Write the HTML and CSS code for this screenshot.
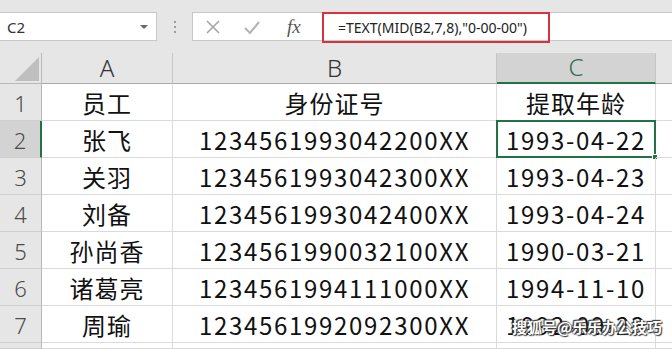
FILE: index.html
```html
<!DOCTYPE html>
<html lang="zh-CN">
<head>
  <meta charset="UTF-8" />
  <title>提取年龄</title>
  <link rel="stylesheet" href="styles.css">
</head>
<body>
  <!-- Formula bar -->
  <div class="formula-bar">
    <div class="name-box">
      <span class="name-text">C2</span>
      <span class="name-arrow"></span>
    </div>
    <div class="grip">
      <span></span><span></span><span></span>
    </div>
    <div class="fx-buttons">
      <svg class="fx-icon" width="16" height="16" viewBox="0 0 16 16">
        <path d="M2 2 L14 14 M14 2 L2 14" stroke="#a6a6a6" stroke-width="1.6" fill="none" />
      </svg>
      <svg class="fx-icon" width="18" height="16" viewBox="0 0 18 16">
        <path d="M2 9 L7 14 L16 3" stroke="#b3b3b3" stroke-width="2" fill="none" />
      </svg>
      <span class="fx-label">fx</span>
    </div>
    <div class="formula-input">
      <span class="formula-mark">=TEXT(MID(B2,7,8),"0-00-00")</span>
    </div>
  </div>

  <!-- Sheet grid -->
  <div class="sheet">
    <div class="corner"><span class="corner-tri"></span></div>
    <div class="col-head">A</div>
    <div class="col-head">B</div>
    <div class="col-head active">C</div>
    <div class="col-head last"></div>

    <div class="row-head">1</div>
    <div class="cell cjk">员工</div>
    <div class="cell cjk">身份证号</div>
    <div class="cell cjk">提取年龄</div>
    <div class="cell last"></div>

    <div class="row-head active">2</div>
    <div class="cell cjk">张飞</div>
    <div class="cell num">1234561993042200XX</div>
    <div class="cell num selected">1993-04-22<span class="fill-handle"></span></div>
    <div class="cell last"></div>

    <div class="row-head">3</div>
    <div class="cell cjk">关羽</div>
    <div class="cell num">1234561993042300XX</div>
    <div class="cell num">1993-04-23</div>
    <div class="cell last"></div>

    <div class="row-head">4</div>
    <div class="cell cjk">刘备</div>
    <div class="cell num">1234561993042400XX</div>
    <div class="cell num">1993-04-24</div>
    <div class="cell last"></div>

    <div class="row-head">5</div>
    <div class="cell cjk">孙尚香</div>
    <div class="cell num">1234561990032100XX</div>
    <div class="cell num">1990-03-21</div>
    <div class="cell last"></div>

    <div class="row-head">6</div>
    <div class="cell cjk">诸葛亮</div>
    <div class="cell num">1234561994111000XX</div>
    <div class="cell num">1994-11-10</div>
    <div class="cell last"></div>

    <div class="row-head">7</div>
    <div class="cell cjk">周瑜</div>
    <div class="cell num">1234561992092300XX</div>
    <div class="cell num">1992-09-23</div>
    <div class="cell last"></div>

    <div class="row-head"></div>
    <div class="cell"></div>
    <div class="cell"></div>
    <div class="cell"></div>
    <div class="cell last"></div>
  </div>

  <!-- Watermark -->
  <div class="watermark">搜狐号@乐乐办公技巧</div>
</body>
</html>
```

FILE: styles.css
```css
/* base */
html, body {
  margin: 0;
  padding: 0;
  background: #e6e6e6;
  overflow: hidden;
  font-family: "Noto Sans", "Noto Sans CJK SC", sans-serif;
  color: #111;
}
*, *::before, *::after {
  box-sizing: border-box;
}
body {
  position: relative;
  width: 672px;
  height: 349px;
}

/* formula bar */
.formula-bar {
  display: flex;
  align-items: stretch;
  height: 53px;
  padding: 12px 0 12px 0;
}
.name-box {
  width: 157px;
  background: #fff;
  border: 1px solid #c8c8c8;
  border-left: none;
  display: flex;
  align-items: center;
  justify-content: space-between;
  padding: 0 8px 0 7px;
}
.name-text {
  font-size: 15px;
  color: #333;
}
.name-arrow {
  width: 0;
  height: 0;
  border-left: 4px solid transparent;
  border-right: 4px solid transparent;
  border-top: 4px solid #666;
  margin-top: 1px;
}
.grip {
  width: 35px;
  display: flex;
  flex-direction: column;
  align-items: center;
  justify-content: center;
  gap: 3px;
}
.grip span {
  width: 2px;
  height: 2px;
  background: #9c9c9c;
}
.fx-buttons {
  width: 130px;
  background: #fff;
  border: 1px solid #c8c8c8;
  border-right: none;
  display: flex;
  align-items: center;
  padding-left: 12px;
  gap: 22px;
}
.fx-label {
  font-family: "Liberation Serif", serif;
  font-style: italic;
  font-size: 19px;
  color: #555;
  margin-left: 4px;
}
.formula-input {
  flex: 1;
  background: #fff;
  border-top: 1px solid #c8c8c8;
  border-bottom: 1px solid #c8c8c8;
  display: flex;
}
.formula-mark {
  width: 228px;
  margin: -1px 0 -3px 0;
  border: 2px solid #d8323c;
  font-size: 14px;
  color: #222;
  padding: 3px 0 0 14px;
  line-height: 22px;
  white-space: nowrap;
}

/* sheet grid */
.sheet {
  display: grid;
  grid-template-columns: 42px 131px 324px 159px 16px;
  grid-template-rows: 31px repeat(7, 37px) 6px;
  background: #fff;
}
.corner {
  background: #e6e6e6;
  border-right: 1px solid #b8b8b8;
  border-bottom: 1px solid #b8b8b8;
  position: relative;
}
.corner-tri {
  position: absolute;
  right: 2px;
  bottom: 2px;
  width: 0;
  height: 0;
  border-left: 24px solid transparent;
  border-bottom: 24px solid #bfbfbf;
}
.col-head {
  background: #e6e6e6;
  border-right: 1px solid #c6c6c6;
  border-bottom: 1px solid #ababab;
  display: flex;
  align-items: flex-end;
  justify-content: center;
  font-size: 24px;
  line-height: 30px;
  color: #333;
  font-weight: 300;
}
.col-head.active {
  background: #d3d3d3;
  color: #3d6b52;
  border-bottom: 2px solid #217346;
}
.col-head.last {
  border-right: none;
}
.row-head {
  background: #e6e6e6;
  border-right: 1px solid #b8b8b8;
  border-bottom: 1px solid #cfcfcf;
  display: flex;
  align-items: flex-end;
  justify-content: center;
  font-size: 22px;
  line-height: 34px;
  color: #4a4a4a;
  font-weight: 300;
  overflow: hidden;
}
.row-head.active {
  background: #d3d3d3;
  border-right: 2px solid #217346;
}
.cell {
  border-right: 1px solid #dadada;
  border-bottom: 1px solid #dadada;
  display: flex;
  align-items: center;
  justify-content: center;
  font-size: 24px;
  color: #111;
  position: relative;
  white-space: nowrap;
}
.cell.last {
  border-right: none;
}
.cjk {
  font-family: "Noto Sans CJK SC", sans-serif;
  letter-spacing: 1px;
}
.num {
  font-family: "Noto Sans CJK SC", sans-serif;
  letter-spacing: 1.7px;
}
.cell.selected {
  border: 2px solid #217346;
  margin: -1px 0 0 -1px;
}
.fill-handle {
  position: absolute;
  right: -4px;
  bottom: -4px;
  width: 6px;
  height: 6px;
  background: #217346;
  border: 1px solid #fff;
}

/* watermark */
.watermark {
  position: absolute;
  left: 512px;
  top: 316px;
  font-family: "Noto Sans CJK SC", sans-serif;
  font-size: 15px;
  font-weight: 700;
  color: #fff;
  white-space: nowrap;
  text-shadow: 0 0 2px #333, 1px 1px 1px #333, -1px -1px 1px #333;
}
```
